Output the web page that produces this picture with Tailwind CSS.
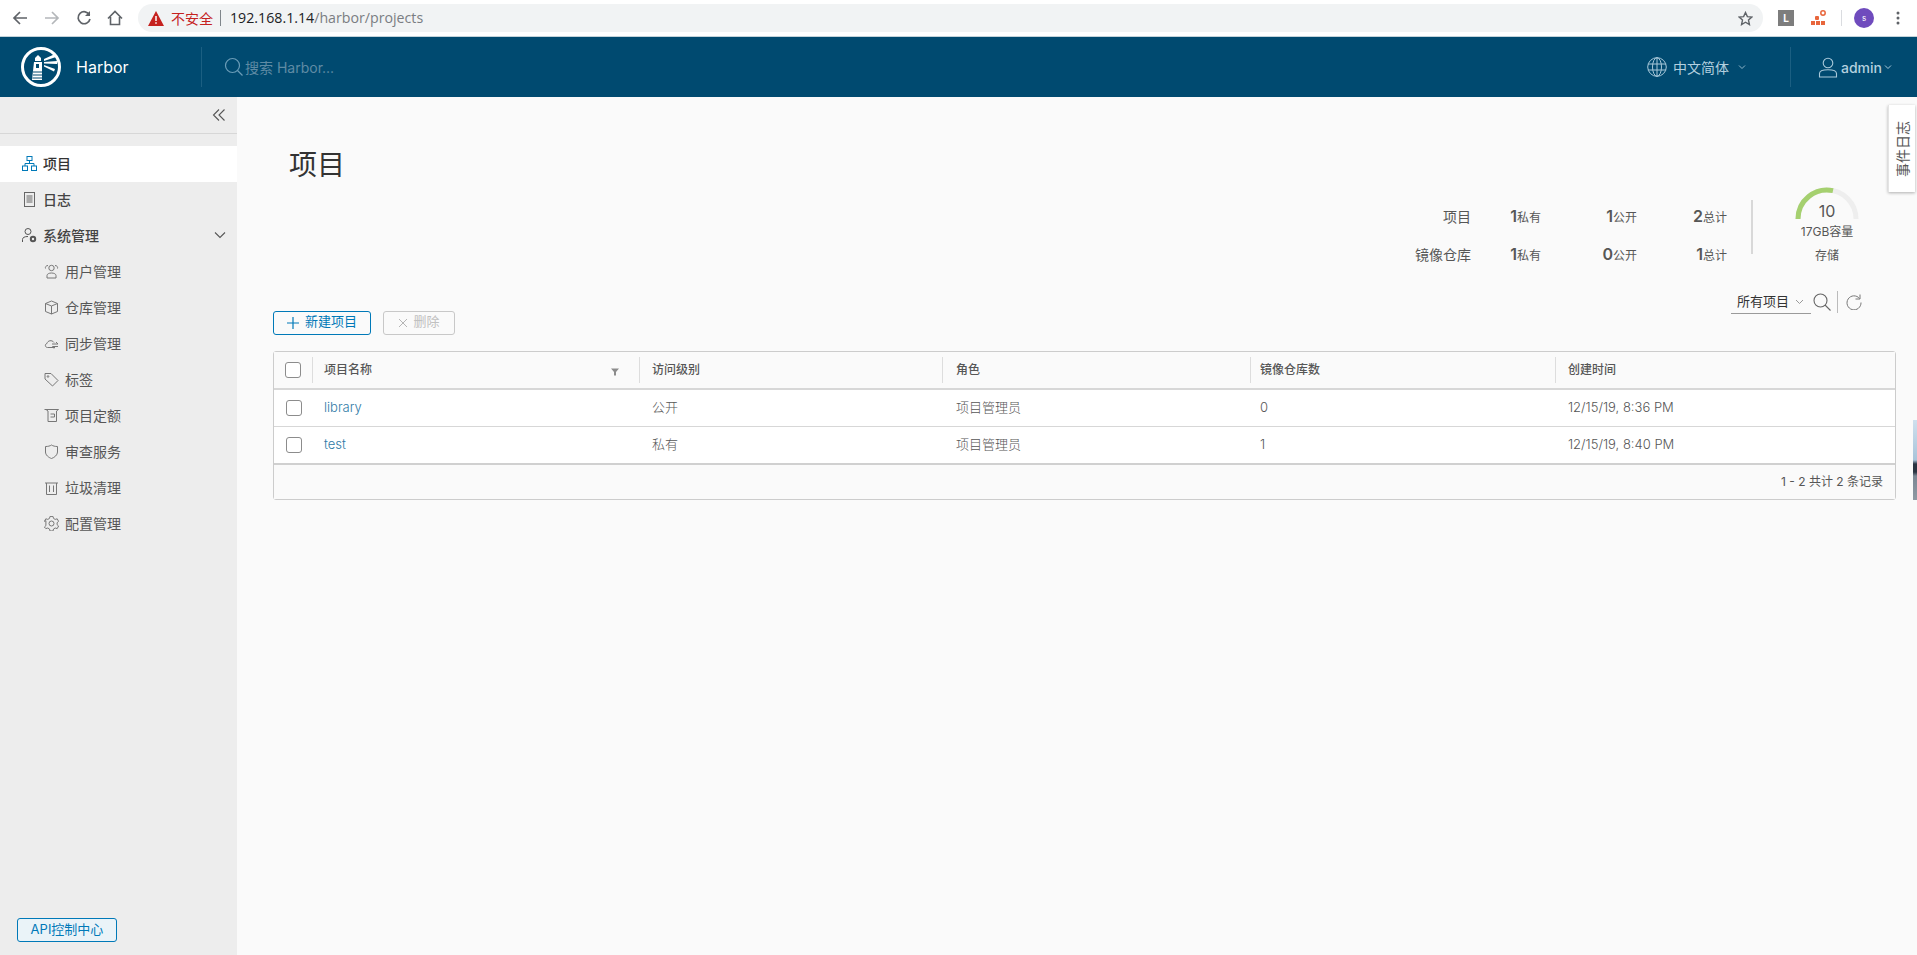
<!DOCTYPE html>
<html lang="zh-CN">
<head>
    <meta charset="UTF-8">
    <title>Harbor</title>
    <script src="https://cdn.jsdelivr.net/npm/@tailwindcss/browser@4"></script>
</head>
<body class="relative h-[955px] w-[1917px] overflow-hidden bg-[#fafafa] font-['Inter','Noto_Sans_CJK_SC',sans-serif] text-[#565656]">

    <!-- browser bar -->
    <div class="flex h-[37px] items-center border-b border-[#c3d3da] bg-white text-[#5f6368]">
        <div class="flex w-[138px] items-center pl-[12px]">
            <svg class="h-4 w-4" viewBox="0 0 16 16" fill="none" stroke="#5f6368" stroke-width="1.7"><path d="M15 8H2M8 2 2 8l6 6"/></svg>
            <svg class="ml-[16px] h-4 w-4" viewBox="0 0 16 16" fill="none" stroke="#b4b7ba" stroke-width="1.7"><path d="M1 8h13M8 2l6 6-6 6"/></svg>
            <svg class="ml-[16px] h-4 w-4" viewBox="0 0 16 16" fill="none" stroke="#5f6368" stroke-width="1.7"><path d="M13.500 5A6 6 0 1 0 14 9"/><path d="M14 1v5H9" fill="#5f6368" stroke="none"/></svg>
            <svg class="ml-[15px] h-4 w-4" viewBox="0 0 16 16" fill="none" stroke="#5f6368" stroke-width="1.6"><path d="M1 8.500 8 1.500l7 7M3.500 7v7.500h9V7"/></svg>
        </div>
        <div class="flex h-[28px] w-[1625px] items-center rounded-full bg-[#f1f3f4] pl-[10px]">
            <svg class="h-[15px] w-[16px]" viewBox="0 0 16 15"><path d="M8 0 16 15H0z" fill="#c5221f"/><path d="M8 5v5M8 11.200v1.600" stroke="#fff" stroke-width="1.500"/></svg>
            <span class="ml-[7px] text-[14px] text-[#c5221f]">不安全</span>
            <span class="ml-[7px] h-[16px] w-px bg-[#80868b]"></span>
            <span class="ml-[9px] font-['Open_Sans',sans-serif] text-[14.2px]"><span class="text-[#202124]">192.168.1.14</span><span class="text-[#7a7d82]">/harbor/projects</span></span>
            <svg class="ml-auto mr-[10px] h-[15px] w-[15px]" viewBox="0 0 16 16" fill="none" stroke="#5f6368" stroke-width="1.500"><path d="m8 1.600 2 4.400 4.700.5-3.500 3.200 1 4.700L8 12l-4.200 2.400 1-4.700L1.300 6.500 6 6z"/></svg>
        </div>
        <div class="flex flex-1 items-center pl-[15px]">
            <span class="flex h-4 w-4 items-center justify-center bg-[#7d7d7d] text-[10px] font-bold text-white">L</span>
            <svg class="ml-[17px] h-4 w-4" viewBox="0 0 16 16" fill="#e8663c"><rect x="4" y="6" width="4" height="4" rx="1"/><rect x="0" y="11" width="4" height="4"/><rect x="5" y="11" width="4" height="4"/><rect x="10" y="11" width="4" height="4"/><circle cx="12" cy="3" r="2.200" fill="none" stroke="#e8663c" stroke-width="1.500"/></svg>
            <span class="ml-[14px] h-[16px] w-px bg-[#dadce0]"></span>
            <span class="ml-[12px] flex h-5 w-5 items-center justify-center rounded-full bg-[#6f4bbd] text-[8px] text-white">s</span>
            <svg class="ml-[22px] h-4 w-1" viewBox="0 0 4 16" fill="#5f6368"><circle cx="2" cy="3" r="1.500"/><circle cx="2" cy="8" r="1.500"/><circle cx="2" cy="13" r="1.500"/></svg>
        </div>
    </div>

    <!-- harbor header -->
    <header class="flex h-[60px] items-center bg-[#004a70]">
        <div class="flex h-[40px] w-[202px] items-center border-r border-[#1b5f82] pl-[21px]">
            <svg class="h-[40px] w-[40px]" viewBox="0 0 40 40" fill="none">
                <circle cx="20" cy="20" r="18.500" stroke="#fff" stroke-width="3"/>
                <path d="M13 15h8v18h-10z" fill="#fff"/>
                <path d="M14 11l3-3 3 3v3h-6z" fill="#fff"/>
                <path d="M15 17h3v4h-3z" fill="#004a70"/>
                <path d="M12 25h9M12 28h9M11.500 31h10" stroke="#004a70" stroke-width="1"/>
                <path d="m23 12 11-5 1 3-12 4zM23 15l13-1v3l-13-.5zM23 18l11 4-1 2.500-10-5z" fill="#fff"/>
            </svg>
            <span class="ml-[15px] text-[16px] text-white">Harbor</span>
        </div>
        <div class="flex items-center pl-[22px]">
            <svg class="h-[20px] w-[20px]" viewBox="0 0 20 20" fill="none" stroke="#6b9db8" stroke-width="1.200"><circle cx="8.500" cy="8.500" r="7"/><path d="m13.500 13.500 5 5"/></svg>
            <span class="ml-px text-[14px] text-[#5f8ba4]">搜索 Harbor...</span>
        </div>
        <div class="ml-auto flex items-center">
            <svg class="h-[20px] w-[20px]" viewBox="0 0 20 20" fill="none" stroke="#a9c9da" stroke-width="1"><circle cx="10" cy="10" r="9.300"/><ellipse cx="10" cy="10" rx="4.500" ry="9.300"/><path d="M10 .7v18.600M1 7h18M1 13h18"/></svg>
            <span class="ml-[6px] text-[14px] text-[#b3d0df]">中文简体</span>
            <svg class="ml-[9px] h-[8px] w-[8px]" viewBox="0 0 8 8" fill="none" stroke="#8fb6ca" stroke-width="1"><path d="m1 2.500 3 3 3-3"/></svg>
            <span class="ml-[44px] h-[40px] w-px bg-[#1b5f82]"></span>
            <svg class="ml-[27px] h-[21px] w-[20px]" viewBox="0 0 20 21" fill="none" stroke="#a9c9da" stroke-width="1.100"><circle cx="10" cy="6" r="4.800"/><path d="M1.500 20v-3.500c0-2 3-3.700 8.500-3.700s8.500 1.700 8.500 3.700V20z"/></svg>
            <span class="ml-[3px] text-[14px] font-medium text-[#b3d0df]">admin</span>
            <svg class="ml-[2px] mr-[25px] h-[8px] w-[8px]" viewBox="0 0 8 8" fill="none" stroke="#a9c9da" stroke-width="1"><path d="m1 2.500 3 3 3-3"/></svg>
        </div>
    </header>

    <div class="flex h-[858px]">
        <!-- sidebar -->
        <aside class="relative w-[237px] shrink-0 bg-[#ededed] text-[14px]">
            <div class="flex h-[37px] items-center justify-end border-b border-[#d7d7d7] pr-[11px]">
                <svg class="h-[14px] w-[14px]" viewBox="0 0 14 14" fill="none" stroke="#565656" stroke-width="1.100"><path d="M7 1.500 1.500 7 7 12.500M12.500 1.500 7 7l5.500 5.500"/></svg>
            </div>
            <nav class="pt-[12px]">
                <a class="flex h-9 items-center bg-white pb-[2px] pl-[22px] font-medium text-[#333]">
                    <svg class="h-[15px] w-[15px]" viewBox="0 0 15 15" fill="none" stroke="#0079b8"><rect x="5" y=".5" width="5" height="4"/><rect x=".5" y="10" width="5" height="4.500"/><rect x="9.500" y="10" width="5" height="4.500"/><path d="M3 10V7.500h9V10M7.500 4.500v3"/></svg>
                    <span class="ml-[6px]">项目</span>
                </a>
                <a class="flex h-9 items-center pb-[2px] pl-[24px] font-medium text-[#444]">
                    <svg class="h-[15px] w-[11px]" viewBox="0 0 11 15" fill="none" stroke="#666"><rect x=".5" y=".5" width="10" height="14"/><path d="M2.500 4h6M2.500 6h6M2.500 8h6M2.500 10h6"/></svg>
                    <span class="ml-[8px]">日志</span>
                </a>
                <a class="flex h-9 items-center pb-[2px] pl-[22px] pr-[11px] font-medium text-[#444]">
                    <svg class="h-[15px] w-[15px]" viewBox="0 0 15 15" fill="none" stroke="#555"><circle cx="6" cy="3.500" r="3"/><path d="M.5 14v-2.500c0-2 2-3 5.500-3"/><circle cx="11" cy="11" r="2.200" stroke-width="2"/></svg>
                    <span class="ml-[6px]">系统管理</span>
                    <svg class="ml-auto h-[12px] w-[12px]" viewBox="0 0 12 12" fill="none" stroke="#565656" stroke-width="1.100"><path d="m1 3.500 5 5 5-5"/></svg>
                </a>
                <a class="flex h-9 items-center pb-[2px] pl-[44px]">
                    <svg class="h-[15px] w-[15px]" viewBox="0 0 15 15" fill="none" stroke="#777"><circle cx="7.500" cy="4" r="2.700"/><path d="M3 14v-2.500c0-1.500 2-2.500 4.500-2.500s4.500 1 4.500 2.500V14zM4 1.500C2 1.500 1 3 1.500 4.500M11 1.500c2 0 3 1.500 2.500 3"/></svg>
                    <span class="ml-[6px]">用户管理</span>
                </a>
                <a class="flex h-9 items-center pb-[2px] pl-[44px]">
                    <svg class="h-[15px] w-[15px]" viewBox="0 0 15 15" fill="none" stroke="#777"><path d="M7.500 1 13.500 3.500v8L7.500 14l-6-2.500v-8zM1.500 3.500l6 2.500 6-2.500M7.500 6v8"/></svg>
                    <span class="ml-[6px]">仓库管理</span>
                </a>
                <a class="flex h-9 items-center pb-[2px] pl-[44px]">
                    <svg class="h-[15px] w-[15px]" viewBox="0 0 15 15" fill="none" stroke="#777"><path d="M11 11.500H3.500C1 11.500.5 8 3 7.500 3.500 4.500 8 3.500 10 6.500"/><path d="M8 8h6M12 6l2 2M14 10.500H8.500M10 12.500l-1.500-2"/></svg>
                    <span class="ml-[6px]">同步管理</span>
                </a>
                <a class="flex h-9 items-center pb-[2px] pl-[44px]">
                    <svg class="h-[15px] w-[15px]" viewBox="0 0 15 15" fill="none" stroke="#777"><path d="M1 1.500h6l7 7-5.500 5.500-7.500-7z"/><circle cx="4" cy="4.500" r=".8"/></svg>
                    <span class="ml-[6px]">标签</span>
                </a>
                <a class="flex h-9 items-center pb-[2px] pl-[44px]">
                    <svg class="h-[15px] w-[15px]" viewBox="0 0 15 15" fill="none" stroke="#777"><path d="M.5 1.500h14M2 1.500l2 1.500v10.500h8.500V3l2-1.500M6.500 6h4v3h-4"/></svg>
                    <span class="ml-[6px]">项目定额</span>
                </a>
                <a class="flex h-9 items-center pb-[2px] pl-[44px]">
                    <svg class="h-[15px] w-[15px]" viewBox="0 0 15 15" fill="none" stroke="#777"><path d="M7.500 1c1.500 1 3.500 1.500 6 1.500V8c0 3-3 5.500-6 6.500-3-1-6-3.500-6-6.500V2.500C4 2.500 6 2 7.500 1z"/></svg>
                    <span class="ml-[6px]">审查服务</span>
                </a>
                <a class="flex h-9 items-center pb-[2px] pl-[44px]">
                    <svg class="h-[15px] w-[15px]" viewBox="0 0 15 15" fill="none" stroke="#777"><path d="M1 3h13M2.500 3v11.500h10V3M5.500 5.500v6.500M9.500 5.500v6.500"/></svg>
                    <span class="ml-[6px]">垃圾清理</span>
                </a>
                <a class="flex h-9 items-center pb-[2px] pl-[44px]">
                    <svg class="h-[15px] w-[15px]" viewBox="0 0 15 15" fill="none" stroke="#777"><circle cx="7.500" cy="7.500" r="2.500"/><path d="M6 .7h3l.5 2 1.700 1 2-.6 1.400 2.600-1.500 1.300v2l1.500 1.300-1.400 2.600-2-.6-1.700 1-.5 2H6l-.5-2-1.700-1-2 .6L.4 11.300l1.500-1.300V5L.4 5.700l1.400-2.600 2 .6 1.700-1z" transform="translate(0 -.3)"/></svg>
                    <span class="ml-[6px]">配置管理</span>
                </a>
            </nav>
            <button class="absolute bottom-[13px] left-[17px] h-[24px] w-[100px] rounded-[3px] border border-[#0079b8] bg-[#eaf3f8] text-[13px] text-[#0079b8]">API控制中心</button>
        </aside>

        <!-- content -->
        <main class="min-w-0 flex-1 pl-[36px] pr-[21px] pt-[50px]">
            <h1 class="h-[36px] pl-[16px] text-[28px] leading-[36px] text-[#333]">项目</h1>

            <div class="mt-[4px] flex h-[80px] justify-end pr-[29px]">
                <div class="grid h-[76px] grid-cols-[90px_70px_96px_90px] grid-rows-[38px_38px] items-center pt-[10px] text-right text-[12px]">
                    <span class="text-[14px]">项目</span>
                    <span><b class="text-[16px] font-semibold">1</b>私有</span>
                    <span><b class="text-[16px] font-semibold">1</b>公开</span>
                    <span><b class="text-[16px] font-semibold">2</b>总计</span>
                    <span class="text-[14px]">镜像仓库</span>
                    <span><b class="text-[16px] font-semibold">1</b>私有</span>
                    <span><b class="text-[16px] font-semibold">0</b>公开</span>
                    <span><b class="text-[16px] font-semibold">1</b>总计</span>
                </div>
                <div class="ml-[24px] mt-[13px] h-[54px] w-[2px] bg-[#d8d8d8]"></div>
                <div class="ml-[34px] flex w-[80px] flex-col items-center text-[12px]">
                    <div class="relative h-[34px] w-[64px]">
                        <svg class="h-[34px] w-[64px]" viewBox="0 0 64 34" fill="none" stroke-width="5"><path d="M3 32A29 29 0 0 1 61 32" stroke="#eeeeee"/><path d="M3 32A29 29 0 0 1 38 3.600" stroke="#a5d06f"/></svg>
                        <span class="absolute inset-x-0 top-[13px] text-center text-[16px] leading-[22px]">10</span>
                    </div>
                    <span class="mt-[3px] leading-[16px]">17GB容量</span>
                    <span class="mt-[8px] leading-[16px]">存储</span>
                </div>
            </div>

            <div class="mt-[24px] flex h-[44px] items-end">
                <button class="flex h-[24px] w-[98px] items-center justify-center rounded-[3px] border border-[#0079b8] pb-[2px] text-[13px] text-[#0079b8]">
                    <svg class="mr-[6px] mt-[2px] h-[12px] w-[12px]" viewBox="0 0 12 12" fill="none" stroke="#0079b8" stroke-width="1.200"><path d="M6 0v12M0 6h12"/></svg>新建项目
                </button>
                <button class="ml-[12px] flex h-[24px] w-[72px] items-center justify-center rounded-[3px] border border-[#c8c8c8] pb-[2px] text-[13px] text-[#c0c0c0]">
                    <svg class="mr-[5px] mt-[2px] h-[10px] w-[10px]" viewBox="0 0 10 10" fill="none" stroke="#b5b5b5"><path d="m1 1 8 8M9 1 1 9"/></svg>删除
                </button>
                <div class="ml-auto flex h-[42px] items-start self-start pr-[34px]">
                    <div class="flex h-[23px] w-[80px] items-center border-b border-[#9a9a9a] pl-[6px] text-[13px] text-[#333]">所有项目
                        <svg class="ml-[6px] h-[8px] w-[9px]" viewBox="0 0 9 8" fill="none" stroke="#999"><path d="m1 2 3.500 3.500L8 2"/></svg>
                    </div>
                    <svg class="ml-[2px] mt-[2px] h-[18px] w-[18px]" viewBox="0 0 18 18" fill="none" stroke="#666" stroke-width="1.100"><circle cx="7.500" cy="7.500" r="6.500"/><path d="m12 12 5.500 5.500"/></svg>
                    <span class="ml-[6px] h-[22px] w-px bg-[#bbb]"></span>
                    <svg class="ml-[8px] mt-[3px] h-[16px] w-[16px]" viewBox="0 0 16 16" fill="none" stroke="#777"><path d="M13.500 4.500A7 7 0 1 0 15 8.500"/><path d="M14 .5v4.500H9.500"/></svg>
                </div>
            </div>

            <!-- projects table -->
            <div class="mt-[16px] h-[149px] rounded-[3px] border border-[#cccccc] bg-white text-[12px]">
                <div class="grid h-[38px] grid-cols-[39px_327px_303px_308px_305px_1fr] items-center border-b-2 border-[#d7d7d7] bg-[#fafafa] font-medium text-[#565656]">
                    <div class="flex h-[26px] items-center justify-center border-r border-[#dddddd]"><span class="h-4 w-4 rounded-[3px] border border-[#8c8c8c] bg-white"></span></div>
                    <div class="flex h-[26px] items-center justify-between border-r border-[#dddddd] pl-[11px] pr-[20px]">项目名称
                        <svg class="mt-[3px] h-[8px] w-[8px]" viewBox="0 0 8 8" fill="#8c8c8c"><path d="M0 .5h8L5 4v3.500H3V4z"/></svg>
                    </div>
                    <div class="flex h-[26px] items-center border-r border-[#dddddd] pl-[12px]">访问级别</div>
                    <div class="flex h-[26px] items-center border-r border-[#dddddd] pl-[13px]">角色</div>
                    <div class="flex h-[26px] items-center border-r border-[#dddddd] pl-[9px]">镜像仓库数</div>
                    <div class="flex h-[26px] items-center pl-[12px]">创建时间</div>
                </div>
                <div class="grid h-[37px] grid-cols-[39px_327px_303px_308px_305px_1fr] items-center border-b border-[#d7d7d7] text-[13px] font-light">
                    <div class="flex justify-center"><span class="h-4 w-4 rounded-[3px] border border-[#8c8c8c]"></span></div>
                    <a class="pl-[11px] text-[#2f7aa6]">library</a>
                    <span class="pl-[12px]">公开</span>
                    <span class="pl-[13px]">项目管理员</span>
                    <span class="pl-[9px]">0</span>
                    <span class="pl-[12px]">12/15/19, 8:36 PM</span>
                </div>
                <div class="grid h-[38px] grid-cols-[39px_327px_303px_308px_305px_1fr] items-center border-b-2 border-[#d0d0d0] text-[13px] font-light">
                    <div class="flex justify-center"><span class="h-4 w-4 rounded-[3px] border border-[#8c8c8c]"></span></div>
                    <a class="pl-[11px] text-[#2f7aa6]">test</a>
                    <span class="pl-[12px]">私有</span>
                    <span class="pl-[13px]">项目管理员</span>
                    <span class="pl-[9px]">1</span>
                    <span class="pl-[12px]">12/15/19, 8:40 PM</span>
                </div>
                <div class="flex h-[34px] items-center justify-end bg-[#fafafa] pr-[12px]">1 - 2 共计 2 条记录</div>
            </div>
        </main>
    </div>

    <!-- event log tab sits over the page edge -->
    <div class="absolute right-[2px] top-[105px] flex h-[87px] w-[27px] items-center justify-center border-l border-[#e4e4e4] bg-white shadow-[0_1px_3px_rgba(0,0,0,0.3)]">
        <span class="rotate-180 text-[14px] [text-orientation:sideways] [writing-mode:vertical-rl]">事件日志</span>
    </div>
    <!-- sliver of the desktop showing at the window edge -->
    <div class="absolute right-0 top-[420px] h-[80px] w-[4px] bg-[linear-gradient(#cfe0ee_0%,#a9c4da_50%,#2a3442_55%,#2a3442_65%,#7b8794_70%,#8f99a3_100%)]"></div>
</body>
</html>
